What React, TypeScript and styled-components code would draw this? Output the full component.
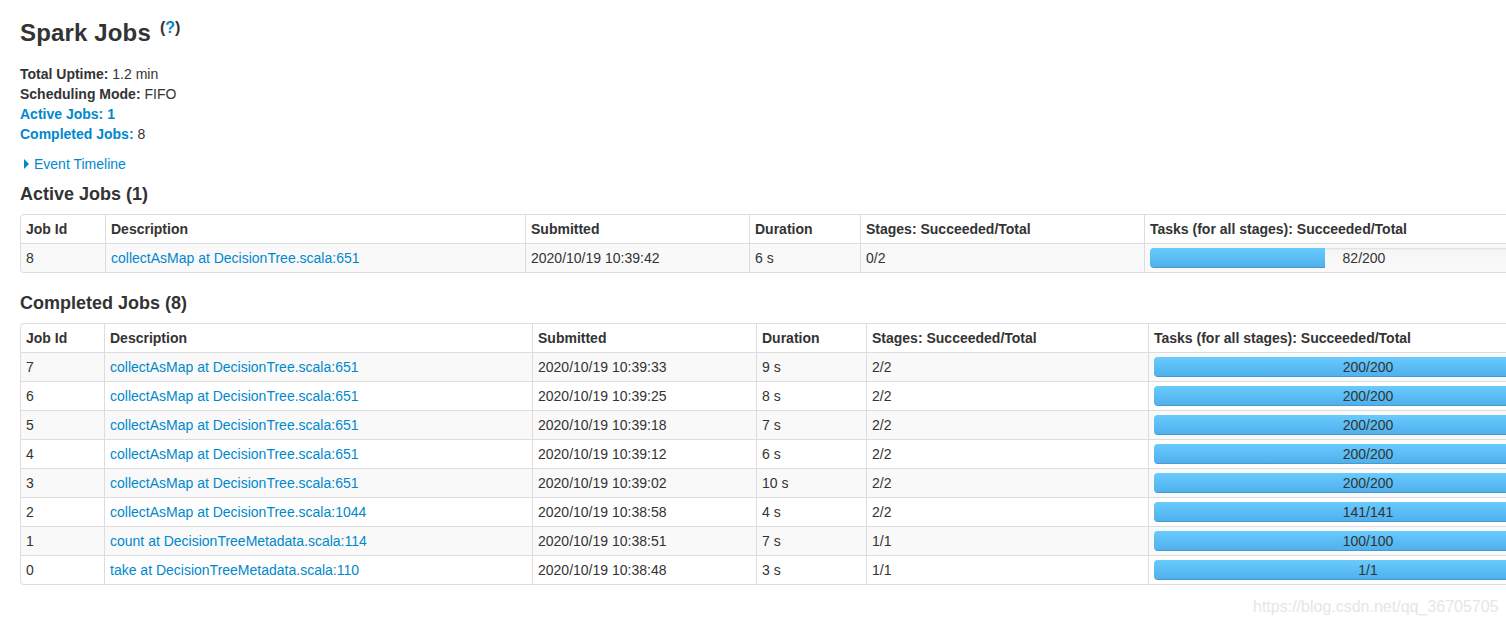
import React from 'react';
import styled, { createGlobalStyle } from 'styled-components';

const GlobalStyle = createGlobalStyle`
	html, body {
		margin: 0;
		padding: 0;
		overflow: hidden;
		background: #fff;
	}
	body {
		font-family: 'Liberation Sans', Arial, Helvetica, sans-serif;
		font-size: 14px;
		line-height: 20px;
		color: #333;
	}
	* {
		box-sizing: border-box;
	}
`;

const Page = styled.div`
	position: relative;
	padding: 13px 0 40px 20px;
	width: 100%;
	height: 625px;
	overflow: hidden;
`;

const Title = styled.h3`
	margin: 0;
	font-size: 24px;
	line-height: 40px;
	font-weight: bold;
	color: #333;
	letter-spacing: 0.15px;
`;

const Sup = styled.sup`
	font-size: 16px;
	line-height: 0;
	vertical-align: 8px;
	margin-left: 9px;
	color: #333;
	letter-spacing: 0;

	a {
		color: #0088cc;
		text-decoration: none;
	}
`;

const Summary = styled.ul`
	list-style: none;
	margin: 11px 0 0;
	padding: 0;
`;

const SummaryItem = styled.li`
	line-height: 20px;
	strong {
		color: #333;
	}
	a {
		color: #0088cc;
		font-weight: bold;
		text-decoration: none;
	}
`;

const Timeline = styled.div`
	margin-top: 10px;
	display: flex;
	align-items: center;
	color: #0088cc;
	line-height: 20px;
	padding-left: 4px;

	span {
		margin-left: 5px;
	}
`;

const Triangle = styled.i`
	display: inline-block;
	width: 0;
	height: 0;
	border-top: 5px solid transparent;
	border-bottom: 5px solid transparent;
	border-left: 5px solid #0088cc;
`;

const Heading = styled.h4<{ $top: number }>`
	margin: ${(p) => p.$top}px 0 0;
	font-size: 18px;
	line-height: 20px;
	font-weight: bold;
	color: #333;
`;

const Table = styled.table`
	margin-top: 10px;
	table-layout: fixed;
	border-collapse: separate;
	border-spacing: 0;
	border: 1px solid #ddd;
	border-left: 0;
	border-radius: 4px;
	font-size: 14px;

	th,
	td {
		padding: 4px 5px;
		line-height: 20px;
		text-align: left;
		vertical-align: top;
		border-left: 1px solid #ddd;
		border-top: 1px solid #ddd;
		white-space: nowrap;
		overflow: hidden;
	}

	thead th {
		border-top: 0;
		font-weight: bold;
		color: #333;
	}

	tbody tr:nth-child(odd) td {
		background: #f9f9f9;
	}

	thead tr th:first-child {
		border-top-left-radius: 4px;
	}
	tbody tr:last-child td:first-child {
		border-bottom-left-radius: 4px;
	}
`;

const JobLink = styled.a`
	color: #0088cc;
	text-decoration: none;
`;

const Progress = styled.div`
	position: relative;
	height: 20px;
	width: 428px;
	border-radius: 4px;
	overflow: hidden;
	background: linear-gradient(#f5f5f5, #f9f9f9);
	box-shadow: inset 0 1px 2px rgba(0, 0, 0, 0.1);
`;

const Bar = styled.div`
	height: 100%;
	background: linear-gradient(#68cbfd, #4eafec);
	box-shadow: inset 0 -1px 0 rgba(0, 0, 0, 0.12);
`;

const ProgressText = styled.span`
	position: absolute;
	left: 0;
	right: 0;
	top: 0;
	text-align: center;
	line-height: 20px;
	color: #333;
`;

const Watermark = styled.div`
	position: absolute;
	left: 1253px;
	top: 597px;
	font-size: 16px;
	line-height: 20px;
	color: #e6e6e6;
`;

type Job = {
	id: number;
	desc: string;
	submitted: string;
	duration: string;
	stages: string;
	done: number;
	total: number;
};

const activeJobs: Job[] = [
	{ id: 8, desc: 'collectAsMap at DecisionTree.scala:651', submitted: '2020/10/19 10:39:42', duration: '6 s', stages: '0/2', done: 82, total: 200 },
];

const completedJobs: Job[] = [
	{ id: 7, desc: 'collectAsMap at DecisionTree.scala:651', submitted: '2020/10/19 10:39:33', duration: '9 s', stages: '2/2', done: 200, total: 200 },
	{ id: 6, desc: 'collectAsMap at DecisionTree.scala:651', submitted: '2020/10/19 10:39:25', duration: '8 s', stages: '2/2', done: 200, total: 200 },
	{ id: 5, desc: 'collectAsMap at DecisionTree.scala:651', submitted: '2020/10/19 10:39:18', duration: '7 s', stages: '2/2', done: 200, total: 200 },
	{ id: 4, desc: 'collectAsMap at DecisionTree.scala:651', submitted: '2020/10/19 10:39:12', duration: '6 s', stages: '2/2', done: 200, total: 200 },
	{ id: 3, desc: 'collectAsMap at DecisionTree.scala:651', submitted: '2020/10/19 10:39:02', duration: '10 s', stages: '2/2', done: 200, total: 200 },
	{ id: 2, desc: 'collectAsMap at DecisionTree.scala:1044', submitted: '2020/10/19 10:38:58', duration: '4 s', stages: '2/2', done: 141, total: 141 },
	{ id: 1, desc: 'count at DecisionTreeMetadata.scala:114', submitted: '2020/10/19 10:38:51', duration: '7 s', stages: '1/1', done: 100, total: 100 },
	{ id: 0, desc: 'take at DecisionTreeMetadata.scala:110', submitted: '2020/10/19 10:38:48', duration: '3 s', stages: '1/1', done: 1, total: 1 },
];

function JobTable({ jobs, widths }: { jobs: Job[]; widths: number[] }) {
	const total = widths.reduce((a, b) => a + b, 0);
	return (
		<Table style={{ width: total + 1 }}>
			<colgroup>
				{widths.map((w, i) => (
					<col key={i} style={{ width: w }} />
				))}
			</colgroup>
			<thead>
				<tr>
					<th>Job Id</th>
					<th>Description</th>
					<th>Submitted</th>
					<th>Duration</th>
					<th>Stages: Succeeded/Total</th>
					<th>Tasks (for all stages): Succeeded/Total</th>
				</tr>
			</thead>
			<tbody>
				{jobs.map((j) => (
					<tr key={j.id}>
						<td>{j.id}</td>
						<td>
							<JobLink href='#'>{j.desc}</JobLink>
						</td>
						<td>{j.submitted}</td>
						<td>{j.duration}</td>
						<td>{j.stages}</td>
						<td>
							<Progress>
								<Bar style={{ width: `${(j.done / j.total) * 100}%` }} />
								<ProgressText>
									{j.done}/{j.total}
								</ProgressText>
							</Progress>
						</td>
					</tr>
				))}
			</tbody>
		</Table>
	);
}

export default function App() {
	return (
		<>
			<GlobalStyle />
			<Page>
				<Title>
					Spark Jobs
					<Sup>
						(<a href='#'>?</a>)
					</Sup>
				</Title>
				<Summary>
					<SummaryItem>
						<strong>Total Uptime:</strong> 1.2 min
					</SummaryItem>
					<SummaryItem>
						<strong>Scheduling Mode:</strong> FIFO
					</SummaryItem>
					<SummaryItem>
						<a href='#'>Active Jobs:</a> <a href='#'>1</a>
					</SummaryItem>
					<SummaryItem>
						<a href='#'>Completed Jobs:</a> 8
					</SummaryItem>
				</Summary>
				<Timeline>
					<Triangle />
					<span>Event Timeline</span>
				</Timeline>
				<Heading $top={10}>Active Jobs (1)</Heading>
				<JobTable jobs={activeJobs} widths={[85, 420, 224, 111, 284, 436]} />
				<Heading $top={20}>Completed Jobs (8)</Heading>
				<JobTable jobs={completedJobs} widths={[84, 428, 224, 110, 282, 436]} />
				<Watermark>https://blog.csdn.net/qq_36705705</Watermark>
			</Page>
		</>
	);
}
